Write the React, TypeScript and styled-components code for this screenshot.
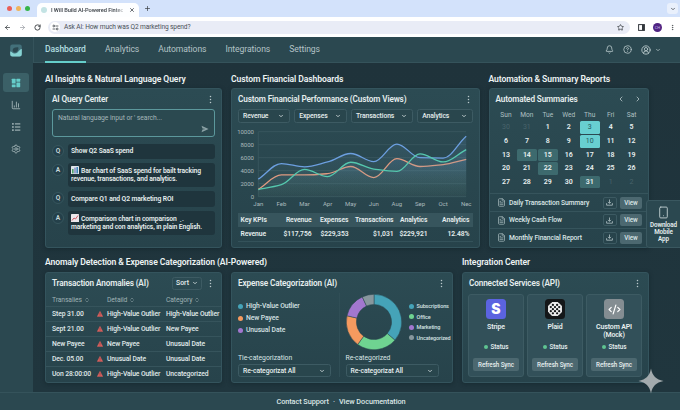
import { ReactNode } from 'react'
import styled, { createGlobalStyle } from 'styled-components'
import {
  ArrowLeft,
  ArrowRight,
  Bell,
  ChevronDown,
  ChevronLeft,
  ChevronRight,
  ChevronsUpDown,
  CircleHelp,
  CircleUserRound,
  CodeXml,
  EllipsisVertical,
  FileText,
  ChartColumn,
  Plus,
  RotateCw,
  Settings,
  Smartphone,
  Star,
  X,
} from 'lucide-react'

const COLORS = {
  bg: '#1f333b',
  bar: '#2b4850',
  text: '#e6eeee',
  muted: '#a9babd',
  teal: '#65cdca',
  bubble: '#1f353d',
}

const GlobalStyle = createGlobalStyle`
  * { box-sizing: border-box; }

  body {
    margin: 0;
    overflow: hidden;
    font-family: Roboto, 'Liberation Sans', sans-serif;
    color: ${COLORS.text};
    background: ${COLORS.bg};
  }

  button {
    font: inherit;
    color: inherit;
    border: 0;
    padding: 0;
    background: none;
  }

  svg { display: block; flex: none; }
`

const Window = styled.div`
  width: 680px;
  height: 410px;
  display: flex;
  flex-direction: column;
  overflow: hidden;
`

/* Browser chrome */

const TabStrip = styled.div`
  height: 17px;
  flex: none;
  display: flex;
  align-items: center;
  padding: 0 2px 0 7px;
  background: #d3e2fb;
`

const Dot = styled.span<{ $color: string; $size?: number; $gap?: number }>`
  width: ${p => p.$size ?? 5}px;
  height: ${p => p.$size ?? 5}px;
  margin-right: ${p => p.$gap ?? 3}px;
  border-radius: 50%;
  flex: none;
  background: ${p => p.$color};
`

const BrowserTab = styled.div`
  align-self: flex-end;
  width: 102px;
  height: 14px;
  margin: 0 5px 0 4px;
  padding: 0 4px 1px;
  display: flex;
  align-items: center;
  border-radius: 5px 5px 0 0;
  background: #fdfeff;
  color: #3c4248;

  > p {
    margin: 0 auto 0 0;
    white-space: nowrap;
    font-size: 5.7px;
    font-weight: 500;
    letter-spacing: -0.08px;
    mask-image: linear-gradient(90deg, #000 88%, rgba(0, 0, 0, 0.25));
  }
`

const Favicon = styled.span`
  width: 6px;
  height: 6px;
  margin-right: 4px;
  flex: none;
  border-radius: 50%;
  background: #c3e3e4;
`

const TabMenu = styled.div`
  width: 11px;
  height: 11px;
  margin-left: auto;
  display: grid;
  place-items: center;
  border-radius: 3px;
  background: #e9f0fc;
  color: #3c4248;
`

const Toolbar = styled.div`
  height: 20px;
  flex: none;
  display: flex;
  align-items: center;
  gap: 8px;
  padding: 0 4px 0 4px;
  background: #fff;
  color: #33383d;
`

const Omnibox = styled.div`
  flex: 1;
  height: 13px;
  margin-left: -1px;
  padding: 0 6px 0 2px;
  display: flex;
  align-items: center;
  border-radius: 7px;
  background: #e9ecf6;

  > p {
    margin: 0 auto 0 4px;
    font-size: 6.6px;
    letter-spacing: -0.11px;
    color: #4a5057;
  }
`

const SiteInfo = styled.span`
  width: 10px;
  height: 10px;
  display: grid;
  place-items: center;
  border-radius: 50%;
  background: #fff;
`

const Profile = styled.span`
  width: 9px;
  height: 9px;
  margin-right: -1px;
  display: grid;
  place-items: center;
  border-radius: 50%;
  background: #4f2482;
  color: #cdb8e8;
  font-size: 4px;
`

/* App frame */

const AppBody = styled.div`
  flex: 1;
  min-height: 0;
  display: flex;
`

const Sidebar = styled.aside`
  width: 33px;
  padding-right: 2px;
  display: flex;
  flex-direction: column;
  align-items: center;
  background: ${COLORS.bar};
  color: ${COLORS.muted};
`

const LogoBox = styled.div`
  height: 36px;
  padding: 7px 0 0 1px;
`

const SideItem = styled.button<{ $active?: boolean }>`
  width: 26px;
  height: 19px;
  margin-bottom: 3.2px;
  display: grid;
  place-items: center;
  border-radius: 3px;
  color: ${p => (p.$active ? COLORS.teal : COLORS.muted)};
  background: ${p => (p.$active ? '#3b6067' : 'transparent')};
`

const Content = styled.div`
  flex: 1;
  display: flex;
  flex-direction: column;
`

const Header = styled.header`
  height: 26px;
  flex: none;
  display: flex;
  align-items: stretch;
  padding: 0 19px 0 11px;
  background: ${COLORS.bar};
  border-left: 1px solid #35535b;
  border-bottom: 1px solid #35535b;
`

const NavItem = styled.button<{ $active?: boolean }>`
  margin: 0 19px -1px 0;
  font-size: 8.6px;
  letter-spacing: -0.08px;
  font-weight: ${p => (p.$active ? 500 : 400)};
  color: ${p => (p.$active ? '#b3dfe0' : '#b3c3c6')};
  border-bottom: 2px solid ${p => (p.$active ? COLORS.teal : 'transparent')};
`

const HeaderIcons = styled.div`
  margin-left: auto;
  display: flex;
  align-items: center;
  gap: 9px;
  color: #b6c6c8;
`

const Account = styled.span`
  display: flex;
  align-items: center;
  gap: 4px;
`

const Main = styled.main`
  flex: 1;
  padding: 9px 31px 0 12px;
  background: linear-gradient(180deg, #1f333b, #20363e);
`

const Row = styled.div<{ $cols: string }>`
  display: grid;
  grid-template-columns: ${p => p.$cols};
  gap: 9px;
`

const SectionTitle = styled.h2<{ $wide?: boolean }>`
  margin: 0;
  height: ${p => (p.$wide ? 24 : 16)}px;
  padding-top: ${p => (p.$wide ? 8 : 1)}px;
  line-height: 12px;
  font-size: 8.6px;
  font-weight: 600;
  letter-spacing: -0.1px;
  white-space: nowrap;
  color: #eef4f4;
`

const Card = styled.section<{ $height: number }>`
  height: ${p => p.$height}px;
  padding: 0 6px;
  border: 1px solid #34545d;
  border-radius: 3px;
  background: linear-gradient(180deg, #2c4b53, #27434b);
  box-shadow: 0 1px 4px rgba(10, 22, 28, 0.35);
  overflow: hidden;
`

const CardHead = styled.div`
  height: 20px;
  display: flex;
  align-items: center;

  > h3 {
    margin: 0 auto 0 0;
    font-size: 8.2px;
    font-weight: 600;
    letter-spacing: -0.13px;
    white-space: nowrap;
  }
`

/* AI query */

const QueryInput = styled.div`
  height: 28px;
  padding: 4px 5px 3px;
  display: flex;
  justify-content: space-between;
  border: 1px solid #5c989c;
  border-radius: 3px;
  font-size: 6.8px;
  letter-spacing: -0.07px;
  color: #a3b5b8;
  background: #2b4950;
  margin-bottom: 6.5px;

  > svg { align-self: flex-end; }
`

const Message = styled.div`
  display: flex;
  align-items: flex-start;
  gap: 4px;
  margin-bottom: 4px;
`

const Avatar = styled.span`
  width: 12px;
  height: 12px;
  margin-top: 1px;
  flex: none;
  display: grid;
  place-items: center;
  border-radius: 50%;
  border: 1px solid #37565e;
  background: #24404a;
  font-size: 6.6px;
  font-weight: 600;
  color: #c9d9db;
`

const Bubble = styled.div<{ $tall?: boolean }>`
  flex: 1;
  height: ${p => (p.$tall ? 24 : 15.5)}px;
  padding: 0 3px;
  display: flex;
  align-items: center;
  border-radius: 3px;
  background: ${COLORS.bubble};
  font-size: 6.75px;
  font-weight: 600;
  line-height: 8.5px;
  letter-spacing: -0.11px;
  white-space: nowrap;

  svg {
    display: inline-block;
    vertical-align: -1.5px;
    margin-right: 2px;
  }
`

/* Performance */

const Filters = styled.div`
  display: flex;
  gap: 4.4px;
`

const Select = styled.button<{ $width: number; $height?: number }>`
  width: ${p => p.$width}px;
  height: ${p => p.$height ?? 14}px;
  padding: 0 5px 0 4px;
  display: flex;
  align-items: center;
  justify-content: space-between;
  border: 1px solid #3d5b63;
  border-radius: 2.5px;
  background: #29464d;
  font-size: 6.8px;
  font-weight: 500;
  letter-spacing: -0.1px;
  white-space: nowrap;
`

const Chart = styled.svg`
  margin: 2px 0 3px -1px;

  text {
    font-size: 6px;
    fill: #a9babd;
  }
`

const KpiTable = styled.table`
  width: 235px;
  margin-left: -0.5px;
  border-collapse: collapse;
  table-layout: fixed;
  font-size: 6.75px;
  letter-spacing: -0.06px;

  th, td {
    height: 14px;
    padding: 0;
    text-align: right;
    font-weight: 600;
  }

  th { background: #37555d; }
  td { border-bottom: 1px solid #34525a; }
  th:first-child, td:first-child { text-align: left; padding-left: 3px; }
  th:last-child, td:last-child { padding-right: 3px; }
`

/* Calendar and reports */

const Calendar = styled.div`
  display: grid;
  grid-template-columns: repeat(7, 20.95px);
  grid-template-rows: 12px repeat(5, 13.55px);
  justify-content: center;
  text-align: center;
  align-items: center;
  font-size: 7px;
`

const WeekDay = styled.span`
  font-size: 6.6px;
  color: #b0c0c3;
`

const Day = styled.span<{ $kind?: string }>`
  width: 20px;
  height: 12.6px;
  line-height: 12.6px;
  margin: auto;
  border-radius: 1.5px;
  font-weight: ${p => (p.$kind === 'out' || p.$kind === 'on' ? 400 : 600)};
  color: ${p => (p.$kind === 'out' ? '#48636b' : p.$kind === 'on' ? '#23595f' : '#e9f0f0')};
  background: ${p => (p.$kind === 'on' ? '#68cfd1' : p.$kind === 'mark' ? '#3d6a6e' : 'transparent')};
`

const Reports = styled.div`
  margin: 4.5px -6px 0;
`

const Report = styled.div`
  height: 17.6px;
  padding: 0 6px 0 7px;
  display: flex;
  align-items: center;
  gap: 3.5px;
  border-top: 1px solid #36545c;
  font-size: 6.75px;
  font-weight: 500;
  letter-spacing: -0.1px;
  color: #dbe6e6;

  > span { margin-right: auto; }
`

const IconButton = styled.button`
  width: 14px;
  height: 12px;
  display: grid;
  place-items: center;
  border: 1px solid #3c5a62;
  border-radius: 2px;
`

const SolidButton = styled.button<{ $width: number; $height: number }>`
  width: ${p => p.$width}px;
  height: ${p => p.$height}px;
  border-radius: 2px;
  background: #4c6870;
  font-size: 6.3px;
  font-weight: 500;
  letter-spacing: -0.1px;
`

const MobileTab = styled.div`
  position: absolute;
  left: 646px;
  top: 200px;
  width: 35px;
  height: 48px;
  padding-top: 5px;
  display: flex;
  flex-direction: column;
  align-items: center;
  gap: 3px;
  border: 1px solid #3a5860;
  border-radius: 3px 0 0 3px;
  background: #2b4850;
  text-align: center;
  font-size: 6.3px;
  font-weight: 600;
  line-height: 7px;
  letter-spacing: -0.12px;
`

/* Anomalies */

const SortButton = styled.button`
  width: 30px;
  height: 13px;
  margin-right: 4px;
  display: flex;
  align-items: center;
  justify-content: center;
  gap: 3px;
  border: 1px solid #3d5b63;
  border-radius: 2.5px;
  font-size: 6.8px;
  font-weight: 500;
`

const AnomalyRow = styled.div<{ $head?: boolean }>`
  height: ${p => (p.$head ? 13 : 15)}px;
  margin: 0 -6px;
  padding-left: 6px;
  display: grid;
  grid-template-columns: 45px 10px 59px 1fr;
  align-items: center;
  border-top: ${p => (p.$head ? 0 : '1px solid #36545c')};
  font-size: 6.75px;
  font-weight: ${p => (p.$head ? 400 : 500)};
  letter-spacing: -0.1px;
  white-space: nowrap;
  color: ${p => (p.$head ? '#9fb1b4' : '#e0eaea')};

  > span {
    display: flex;
    align-items: center;
    gap: 2px;
  }
`

/* Expense categories */

const ExpenseGrid = styled.div`
  display: grid;
  grid-template-columns: 101px 1fr;
  height: 84px;
`

const ExpenseSide = styled.div<{ $divided?: boolean }>`
  display: flex;
  flex-direction: column;
  justify-content: flex-end;
  padding-left: ${p => (p.$divided ? 5.5 : 0)}px;
  border-left: ${p => (p.$divided ? '1px solid #304e56' : 0)};

  > label {
    margin-bottom: 1px;
    font-size: 6.8px;
    line-height: 9px;
    letter-spacing: -0.02px;
    color: #dbe6e6;
  }
`

const Legend = styled.div<{ $small?: boolean }>`
  display: flex;
  flex-direction: column;
  gap: ${p => (p.$small ? 2.6 : 3)}px;
  margin-bottom: ${p => (p.$small ? 0 : 19)}px;
  font-size: ${p => (p.$small ? 5.5 : 6.8)}px;
  line-height: ${p => (p.$small ? 8 : 9)}px;
  letter-spacing: ${p => (p.$small ? -0.12 : -0.1)}px;
  font-weight: 500;
  color: #d5e1e2;

  > div {
    display: flex;
    align-items: center;
  }
`

const DonutRow = styled.div`
  display: flex;
  align-items: center;
  gap: 7.5px;
  margin-bottom: 4px;
  white-space: nowrap;
`

/* Integrations */

const Services = styled.div`
  display: flex;
  gap: 3px;
  margin: 1px 0 0 -1px;
`

const Service = styled.div`
  width: 56px;
  height: 83px;
  padding: 4px 0 5px;
  display: flex;
  flex-direction: column;
  align-items: center;
  border: 1px solid #3d5b63;
  border-radius: 3px;
  background: #325059;

  > p {
    margin: 4px 0 auto;
    font-size: 7px;
    font-weight: 600;
    line-height: 8px;
    letter-spacing: -0.13px;
    text-align: center;
  }

  > div {
    display: flex;
    align-items: center;
    margin-bottom: 6.5px;
    font-size: 6.4px;
    font-weight: 500;
    line-height: 9px;
    letter-spacing: -0.1px;
  }
`

const ServiceIcon = styled.span<{ $color: string }>`
  width: 20px;
  height: 20px;
  flex: none;
  display: grid;
  place-items: center;
  border-radius: 3.5px;
  background: ${p => p.$color};
  color: #fff;
  font-family: Inter, sans-serif;
  font-size: 14px;
  line-height: 20px;
  font-weight: 900;
`

const Footer = styled.footer`
  height: 18px;
  flex: none;
  display: flex;
  justify-content: center;
  align-items: center;
  gap: 4px;
  padding-left: 2px;
  border-top: 1px solid #35535b;
  background: ${COLORS.bar};
  font-size: 7.3px;
  font-weight: 500;
  letter-spacing: -0.06px;
  color: #dbe6e6;
`

const Sparkle = styled.svg`
  position: absolute;
  left: 638px;
  top: 368px;
`

const MONTHS = ['Jan', 'Feb', 'Mar', 'Apr', 'May', 'Jun', 'Aug', 'Sep', 'Oct', 'Nec']

const SERIES = [
  { color: '#6c9fe0', values: [2700, 5100, 4600, 5350, 6650, 5400, 8100, 6000, 5950, 9300] },
  { color: '#e09a80', values: [1150, 3350, 3350, 3550, 4650, 2950, 5850, 4650, 4950, 5750] },
  { color: '#55c8ae', values: [1100, 1850, 4200, 3100, 5300, 4250, 3900, 6600, 5350, 7250] },
]

const REPORTS = ['Daily Transaction Summary', 'Weekly Cash Flow', 'Monthly Financial Report']

const ANOMALIES = [
  ['Step 31.00', 'High-Value Outlier', 'High-Value Outlier'],
  ['Sept 21.00', 'High-Value Outlier', 'New Payee'],
  ['New Payee', 'New Payee', 'Unusual Date'],
  ['Dec. 05.00', 'Unusual Date', 'Unusual Date'],
  ['Uon 28:00:00', 'High-Value Outlier', 'Uncategorized'],
]

const SLICES = [
  { color: '#45a3b8', from: 0, to: 131 },
  { color: '#6fd391', from: 131, to: 216 },
  { color: '#f59a5f', from: 216, to: 283 },
  { color: '#a277cf', from: 283, to: 335 },
  { color: '#87979d', from: 335, to: 360 },
]

const px = (i: number) => 21.3 + i * 23.1
const py = (v: number) => 71.7 - v * 0.0065

// Smooth curve with flat peaks
const curve = (values: number[]) => {
  const slope = values.map((v, i) => {
    if (i === 0) return values[1] - v
    if (i === values.length - 1) return v - values[i - 1]
    const a = v - values[i - 1]
    const b = values[i + 1] - v
    return a * b <= 0 ? 0 : (2 * a * b) / (a + b)
  })
  return values.reduce((d, v, i) => {
    if (i === 0) return `M${px(0)} ${py(v)}`
    const c1 = py(values[i - 1] + slope[i - 1] / 3)
    const c2 = py(v - slope[i] / 3)
    return `${d} C${px(i - 1) + 8.5} ${c1} ${px(i) - 8.5} ${c2} ${px(i)} ${py(v)}`
  }, '')
}

const slicePath = (from: number, to: number) => {
  const at = (deg: number, r: number) => {
    const a = ((deg - 90) * Math.PI) / 180
    return `${28 + r * Math.cos(a)} ${28 + r * Math.sin(a)}`
  }
  const large = to - from > 180 ? 1 : 0
  return `M${at(from, 27.7)} A27.7 27.7 0 ${large} 1 ${at(to, 27.7)} L${at(to, 17.6)} A17.6 17.6 0 ${large} 0 ${at(from, 17.6)}Z`
}

const More = () => (
  <svg width="9" height="9" viewBox="0 0 9 9" fill="#b9c8ca">
    {[1.5, 4.5, 7.5].map(y => <circle key={y} cx="4.5" cy={y} r="0.75" />)}
  </svg>
)

const Grid = () => (
  <svg width="10" height="10" viewBox="0 0 10 10" fill="currentColor">
    <rect x="0.8" y="0.8" width="3.8" height="4.8" rx="0.4" />
    <rect x="5.4" y="0.8" width="3.8" height="3" rx="0.4" />
    <rect x="0.8" y="6.4" width="3.8" height="2.8" rx="0.4" />
    <rect x="5.4" y="4.6" width="3.8" height="4.6" rx="0.4" />
  </svg>
)

const Bullets = () => (
  <svg width="10" height="10" viewBox="0 0 10 10" fill="currentColor">
    {[1.2, 4.3, 7.4].map(y => (
      <g key={y}>
        <rect x="1" y={y} width="1.8" height="1.4" />
        <rect x="3.9" y={y + 0.15} width="5.4" height="1.1" />
      </g>
    ))}
  </svg>
)

const Tune = () => (
  <svg width="7" height="7" viewBox="0 0 7 7" fill="none" stroke="#3f454b" strokeWidth="0.8">
    <circle cx="1.8" cy="2" r="0.9" />
    <path d="M3.4 2 H6.4 M0.6 5 H3.4" />
    <circle cx="5.2" cy="5" r="0.9" />
  </svg>
)

const Send = () => (
  <svg width="8" height="8" viewBox="0 0 8 8" fill="#8ba2a6">
    <path d="M0.5 0.8 L7.6 4 L0.5 7.2 L1.5 4.6 L4.6 4 L1.5 3.4Z" />
  </svg>
)

const Save = () => (
  <svg width="7" height="7" viewBox="0 0 7 7" fill="none" stroke="#b3c3c6" strokeWidth="0.8">
    <path d="M3.5 0.5 V4.2 M2 2.9 L3.5 4.4 L5 2.9 M0.6 4.2 V6.2 H6.4 V4.2" />
  </svg>
)

const BarEmoji = () => (
  <svg width="8" height="8" viewBox="0 0 8 8">
    <rect width="8" height="8" rx="0.6" fill="#dfe6ea" />
    <rect x="1" y="3" width="1.6" height="4.4" fill="#4fa36d" />
    <rect x="3.2" y="1.6" width="1.6" height="5.8" fill="#8a93c9" />
    <rect x="5.4" y="1" width="1.6" height="6.4" fill="#3f86b9" />
  </svg>
)

const TrendEmoji = () => (
  <svg width="8" height="8" viewBox="0 0 8 8">
    <rect width="8" height="8" rx="0.6" fill="#ebe8ec" />
    <path d="M1 6.5 L3 4 L4.5 5 L7 1.5" fill="none" stroke="#cf5a66" strokeWidth="1" />
  </svg>
)

const Logo = () => (
  <svg width="12" height="13" viewBox="0 0 12 13">
    <rect x="0.2" y="0.5" width="11.6" height="12" rx="2.2" fill="#43707a" />
    <path d="M0.2 7.6 C2 7.6 2.4 9.8 5 9.6 C8.2 9.4 8.6 5.6 11.8 5 V10.3 A2.2 2.2 0 0 1 9.6 12.5 H2.4 A2.2 2.2 0 0 1 0.2 10.3Z" fill="#86d3d3" />
    <path d="M2.6 6.2 C2.6 4 4.8 3 8.2 3.2 C9 4.8 7.4 8.4 5 8.4 C3.6 8.4 2.8 7.4 2.6 6.2Z" fill="#2b4850" />
  </svg>
)

const Warning = () => (
  <svg width="6" height="6" viewBox="0 0 6 6">
    <path d="M3 0.3 L5.8 5.6 H0.2Z" fill="#d9605d" stroke="#d9605d" strokeWidth="0.4" strokeLinejoin="round" />
    <path d="M3 2 V3.8 M3 4.4 V5" stroke="#7d383c" strokeWidth="0.6" />
  </svg>
)

// Octagonal plate pierced by staggered rows of holes
const HOLES = [
  [4.9, 2.9], [9.1, 2.9],
  [2.8, 5.1], [7, 5.1], [11.2, 5.1],
  [4.9, 7.2], [9.1, 7.2],
  [2.8, 9.2], [7, 9.2], [11.2, 9.2],
  [4.9, 11.3], [9.1, 11.3],
]

const PlaidMark = () => (
  <svg width="14" height="14" viewBox="0 0 14 14">
    <path d="M4 0.6 H10 L13.4 4 V10 L10 13.4 H4 L0.6 10 V4Z" fill="#f0f0f0" stroke="#f0f0f0" strokeLinejoin="round" />
    {HOLES.map(([x, y]) => <circle key={`${x}-${y}`} cx={x} cy={y} r="1.15" fill="#141719" />)}
  </svg>
)

const dayKind = (i: number) => {
  if (i < 2 || i > 32) return 'out'
  if (i === 4 || i === 11) return 'on'
  if ([15, 16, 23, 32].includes(i)) return 'mark'
  return undefined
}

const dayLabel = (i: number) => (i < 2 ? 30 + i : i > 32 ? i - 32 : i - 1)

const ServiceCard = ({ color, icon, name }: { color: string; icon: ReactNode; name: ReactNode }) => (
  <Service>
    <ServiceIcon $color={color}>{icon}</ServiceIcon>
    <p>{name}</p>
    <div>
      <Dot $color="#5fc492" $size={4.4} $gap={2.5} />
      Status
    </div>
    <SolidButton $width={46} $height={13}>Refresh Sync</SolidButton>
  </Service>
)

const PerformanceChart = () => (
  <Chart width="237" height="85" viewBox="0 0 237 85">
    <defs>
      <linearGradient id="area" x1="0" y1="0" x2="0" y2="1">
        <stop offset="0" stopColor="#5f92c8" stopOpacity="0.3" />
        <stop offset="1" stopColor="#6f9a86" stopOpacity="0.04" />
      </linearGradient>
    </defs>
    {[0, 2000, 4000, 6000, 8000, 10000].map(v => (
      <g key={v}>
        <line x1={px(0)} x2={px(9)} y1={py(v)} y2={py(v)} stroke="#3b5961" strokeWidth="0.8" />
        <text x="17" y={py(v) + 2.1} textAnchor="end">{v}</text>
      </g>
    ))}
    <line x1={px(0)} x2={px(0)} y1={py(10000)} y2={py(0)} stroke="#3b5961" strokeWidth="0.8" />
    {SERIES.map(s => (
      <g key={s.color}>
        <path d={`${curve(s.values)} V${py(0)} H${px(0)}Z`} fill="url(#area)" opacity="0.6" />
        <path d={curve(s.values)} fill="none" stroke={s.color} strokeWidth="1.3" />
      </g>
    ))}
    {MONTHS.map((m, i) => (
      <text key={m} x={px(i)} y="81.3" textAnchor="middle">{m}</text>
    ))}
  </Chart>
)

const App = () => (
  <Window>
    <GlobalStyle />

    <TabStrip>
      <Dot $color="#ea5f58" $gap={4} />
      <Dot $color="#f0b45a" $gap={4} />
      <Dot $color="#35b44a" />
      <BrowserTab>
        <Favicon />
        <p>I Will Build AI-Powered Fintec</p>
        <X size={6} strokeWidth={3} />
      </BrowserTab>
      <Plus size={7} strokeWidth={2.5} color="#3c4248" />
      <TabMenu><ChevronDown size={6} strokeWidth={3} /></TabMenu>
    </TabStrip>

    <Toolbar>
      <ArrowLeft size={7} strokeWidth={2.5} />
      <ArrowRight size={7} strokeWidth={2.5} color="#9a9fa5" />
      <RotateCw size={7} strokeWidth={3} />
      <Omnibox>
        <SiteInfo><Tune /></SiteInfo>
        <p>Ask AI: How much was Q2 marketing spend?</p>
        <Star size={7} strokeWidth={2.5} />
      </Omnibox>
      <svg width="7" height="7" viewBox="0 0 7 7">
        <rect x="0.6" y="0.6" width="5.8" height="5.8" fill="none" stroke="#33383d" />
        <rect x="4" y="0.6" width="2.4" height="5.8" fill="#33383d" />
      </svg>
      <Profile>CH</Profile>
      <EllipsisVertical size={7} />
    </Toolbar>

    <AppBody>
      <Sidebar>
        <LogoBox><Logo /></LogoBox>
        <SideItem $active><Grid /></SideItem>
        <SideItem><ChartColumn size={10} /></SideItem>
        <SideItem><Bullets /></SideItem>
        <SideItem><Settings size={10} /></SideItem>
      </Sidebar>

      <Content>
        <Header>
          <NavItem $active>Dashboard</NavItem>
          <NavItem>Analytics</NavItem>
          <NavItem>Automations</NavItem>
          <NavItem>Integrations</NavItem>
          <NavItem>Settings</NavItem>
          <HeaderIcons>
            <Bell size={9} strokeWidth={2.2} />
            <CircleHelp size={9} strokeWidth={2.2} />
            <Account><CircleUserRound size={10} strokeWidth={2.2} /><ChevronDown size={6} strokeWidth={3} /></Account>
          </HeaderIcons>
        </Header>

        <Main>
          <Row $cols="177px 248.5px 160.5px">
            <div>
              <SectionTitle>AI Insights &amp; Natural Language Query</SectionTitle>
              <Card $height={160}>
                <CardHead><h3>AI Query Center</h3><More /></CardHead>
                <QueryInput>
                  Natural language input or ' search...
                  <Send />
                </QueryInput>
                <Message>
                  <Avatar>Q</Avatar>
                  <Bubble>Show Q2 SaaS spend</Bubble>
                </Message>
                <Message>
                  <Avatar>A</Avatar>
                  <Bubble $tall>
                    <div><BarEmoji />Bar chart of SaaS spend for bailt tracking<br />revenue, transactions, and analytics.</div>
                  </Bubble>
                </Message>
                <Message>
                  <Avatar>Q</Avatar>
                  <Bubble>Compare Q1 and Q2 marketing ROI</Bubble>
                </Message>
                <Message>
                  <Avatar>A</Avatar>
                  <Bubble $tall>
                    <div><TrendEmoji />Comparison chart in comparison &nbsp;ˎ.<br />marketing and con analytics, in plain English.</div>
                  </Bubble>
                </Message>
              </Card>
            </div>

            <div>
              <SectionTitle>Custom Financial Dashboards</SectionTitle>
              <Card $height={160}>
                <CardHead><h3>Custom Financial Performance (Custom Views)</h3><More /></CardHead>
                <Filters>
                  <Select $width={52}>Revenue <ChevronDown size={6} strokeWidth={3} /></Select>
                  <Select $width={52.5}>Expenses <ChevronDown size={6} strokeWidth={3} /></Select>
                  <Select $width={62}>Transactions <ChevronDown size={6} strokeWidth={3} /></Select>
                  <Select $width={55.5}>Analytics <ChevronDown size={6} strokeWidth={3} /></Select>
                </Filters>
                <PerformanceChart />
                <KpiTable>
                  <colgroup>
                    <col width="36" /><col width="38" /><col width="37" />
                    <col width="45" /><col width="34" /><col width="45" />
                  </colgroup>
                  <thead>
                    <tr><th>Key KPIs</th><th>Revenue</th><th>Expenses</th><th>Transactions</th><th>Analytics</th><th>Analytics</th></tr>
                  </thead>
                  <tbody>
                    <tr><td>Revenue</td><td>$117,756</td><td>$229,353</td><td>$1,031</td><td>$229,921</td><td>12.48%</td></tr>
                  </tbody>
                </KpiTable>
              </Card>
            </div>

            <div>
              <SectionTitle>Automation &amp; Summary Reports</SectionTitle>
              <Card $height={160}>
                <CardHead>
                  <h3>Automated Summaries</h3>
                  <Row $cols="8px 8px">
                    <ChevronLeft size={8} strokeWidth={2.5} color="#b3c3c5" />
                    <ChevronRight size={8} strokeWidth={2.5} color="#b3c3c5" />
                  </Row>
                </CardHead>
                <Calendar>
                  {['Sun', 'Mon', 'Tue', 'Wed', 'Thu', 'Fri', 'Sat'].map(d => <WeekDay key={d}>{d}</WeekDay>)}
                  {Array.from({ length: 35 }, (_, i) => (
                    <Day key={i} $kind={dayKind(i)}>{dayLabel(i)}</Day>
                  ))}
                </Calendar>
                <Reports>
                  {REPORTS.map(name => (
                    <Report key={name}>
                      <FileText size={9} color="#a3b5b8" />
                      <span>{name}</span>
                      <IconButton><Save /></IconButton>
                      <SolidButton $width={22} $height={12}>View</SolidButton>
                    </Report>
                  ))}
                </Reports>
              </Card>
            </div>
          </Row>

          <Row $cols="177px 222px 187px">
            <div>
              <SectionTitle $wide>Anomaly Detection &amp; Expense Categorization (AI-Powered)</SectionTitle>
              <Card $height={111}>
                <CardHead>
                  <h3>Transaction Anomalies (AI)</h3>
                  <SortButton>Sort <ChevronDown size={6} strokeWidth={3} /></SortButton>
                  <More />
                </CardHead>
                <AnomalyRow $head>
                  <span>Transalies <ChevronsUpDown size={6} /></span>
                  <span />
                  <span>Detaild <ChevronsUpDown size={6} /></span>
                  <span>Category <ChevronsUpDown size={6} /></span>
                </AnomalyRow>
                {ANOMALIES.map(([name, detail, category]) => (
                  <AnomalyRow key={name}>
                    <span>{name}</span>
                    <span><Warning /></span>
                    <span>{detail}</span>
                    <span>{category}</span>
                  </AnomalyRow>
                ))}
              </Card>
            </div>

            <div>
              <SectionTitle $wide />
              <Card $height={111}>
                <CardHead><h3>Expense Categorization (AI)</h3><More /></CardHead>
                <ExpenseGrid>
                  <ExpenseSide>
                    <Legend>
                      <div><Dot $color="#45a3b8" />High-Value Outlier</div>
                      <div><Dot $color="#f59a5f" />New Payee</div>
                      <div><Dot $color="#a277cf" />Unusual Date</div>
                    </Legend>
                    <label>Tie-categorization</label>
                    <Select $width={93} $height={13}>Re-categorizat All <ChevronDown size={6} strokeWidth={3} /></Select>
                  </ExpenseSide>
                  <ExpenseSide $divided>
                    <DonutRow>
                      <svg width="56" height="56" viewBox="0 0 56 56">
                        {SLICES.map(s => (
                          <path key={s.color} d={slicePath(s.from, s.to)} fill={s.color} stroke="#2a474f" strokeWidth="0.5" />
                        ))}
                      </svg>
                      <Legend $small>
                        <div><Dot $color="#45a3b8" $gap={2.5} />Subscriptions</div>
                        <div><Dot $color="#6fd391" $gap={2.5} />Office</div>
                        <div><Dot $color="#a277cf" $gap={2.5} />Marketing</div>
                        <div><Dot $color="#87979d" $gap={2.5} />Uncategorized</div>
                      </Legend>
                    </DonutRow>
                    <label>Re-categorized</label>
                    <Select $width={93} $height={13}>Re-categorizat All <ChevronDown size={6} strokeWidth={3} /></Select>
                  </ExpenseSide>
                </ExpenseGrid>
              </Card>
            </div>

            <div>
              <SectionTitle $wide>Integration Center</SectionTitle>
              <Card $height={111}>
                <CardHead><h3>Connected Services (API)</h3><More /></CardHead>
                <Services>
                  <ServiceCard color="#5b63e0" icon="S" name="Stripe" />
                  <ServiceCard color="#141719" icon={<PlaidMark />} name="Plaid" />
                  <ServiceCard color="#848d92" icon={<CodeXml size={13} strokeWidth={2.2} />} name={<>Custom API<br />(Mock)</>} />
                </Services>
              </Card>
            </div>
          </Row>
        </Main>
      </Content>
    </AppBody>

    <Footer>
      <span>Contact Support</span>
      <span>·</span>
      <span>View Documentation</span>
    </Footer>

    <MobileTab>
      <Smartphone size={13} color="#b9c9cb" strokeWidth={1.8} />
      <span>Download<br />Mobile<br />App</span>
    </MobileTab>

    <Sparkle width="26" height="26" viewBox="0 0 26 26">
      <path d="M13 0.5 C14.5 8 18 11.5 25.5 13 C18 14.5 14.5 18 13 25.5 C11.5 18 8 14.5 0.5 13 C8 11.5 11.5 8 13 0.5Z" fill="#a3abae" />
    </Sparkle>
  </Window>
)

export default App
